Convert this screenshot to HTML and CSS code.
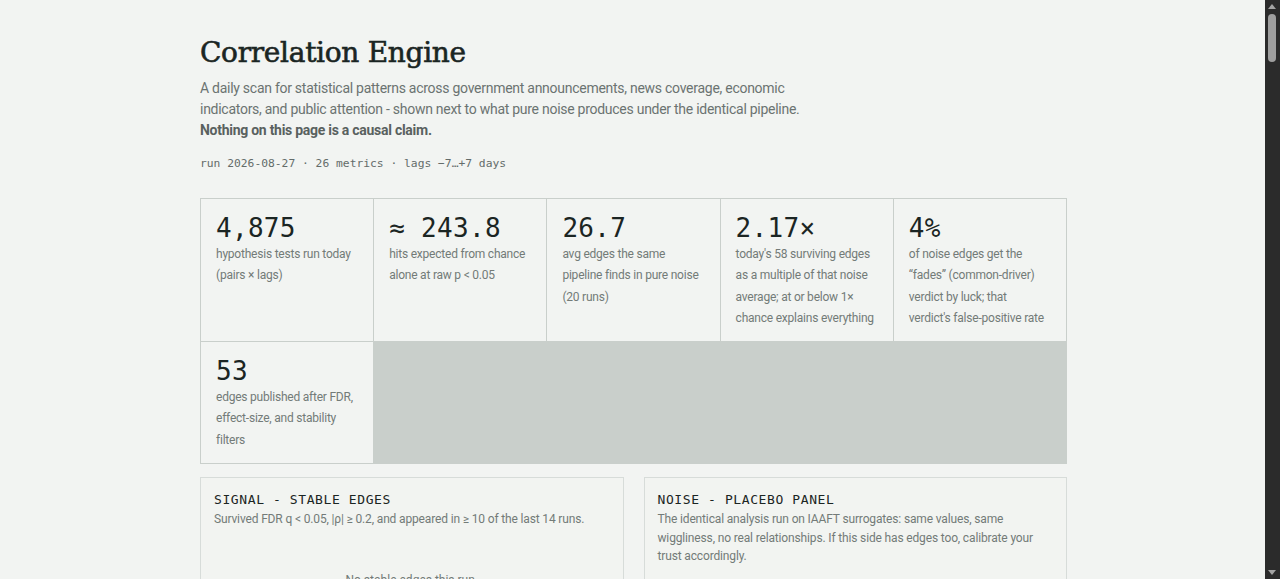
FILE: index.html
```html
<!DOCTYPE html>
<html lang="en">
<head>
<meta charset="utf-8">
<title>Correlation Engine</title>
<link rel="stylesheet" href="styles.css">
</head>
<body>
<main class="page">
  <header class="intro">
    <h1 class="title">Correlation Engine</h1>
    <p class="lede">A daily scan for statistical patterns across government announcements, news coverage, economic indicators, and public attention - shown next to what pure noise produces under the identical pipeline. <strong>Nothing on this page is a causal claim.</strong></p>
    <p class="meta">run 2026-08-27 · 26 metrics · lags −7…+7 days</p>
  </header>

  <section class="stats">
    <div class="stat">
      <div class="num">4,875</div>
      <div class="label">hypothesis tests run today (pairs × lags)</div>
    </div>
    <div class="stat">
      <div class="num">≈ 243.8</div>
      <div class="label">hits expected from chance alone at raw p &lt; 0.05</div>
    </div>
    <div class="stat">
      <div class="num">26.7</div>
      <div class="label">avg edges the same pipeline finds in pure noise (20 runs)</div>
    </div>
    <div class="stat">
      <div class="num">2.17×</div>
      <div class="label">today's 58 surviving edges as a multiple of that noise average; at or below 1× chance explains everything</div>
    </div>
    <div class="stat">
      <div class="num">4%</div>
      <div class="label">of noise edges get the “fades” (common-driver) verdict by luck; that verdict's false-positive rate</div>
    </div>
    <div class="stat">
      <div class="num">53</div>
      <div class="label">edges published after FDR, effect-size, and stability filters</div>
    </div>
  </section>

  <section class="panels">
    <article class="panel">
      <h2 class="panel-title">SIGNAL - STABLE EDGES</h2>
      <p class="panel-desc">Survived FDR q &lt; 0.05, |ρ| ≥ 0.2, and appeared in ≥ 10 of the last 14 runs.</p>
      <div class="panel-body">
        <p class="empty">No stable edges this run.</p>
      </div>
    </article>
    <article class="panel">
      <h2 class="panel-title">NOISE - PLACEBO PANEL</h2>
      <p class="panel-desc">The identical analysis run on IAAFT surrogates: same values, same wiggliness, no real relationships. If this side has edges too, calibrate your trust accordingly.</p>
      <div class="panel-body"></div>
    </article>
  </section>
</main>

<div class="scrollbar" aria-hidden="true">
  <div class="sb-arrow sb-up"></div>
  <div class="sb-thumb"></div>
  <div class="sb-arrow sb-down"></div>
</div>
</body>
</html>
```
FILE: styles.css
```css
html, body {
  margin: 0;
  padding: 0;
  background: #f2f4f2;
}
body {
  font-family: Roboto, "Noto Sans", sans-serif;
  color: #1b2523;
  padding-right: 13px;
}
.page {
  width: 867px;
  margin: 0 auto;
  padding: 33px 0 80px;
}
.title {
  font-family: "DejaVu Serif", serif;
  font-weight: 400;
  -webkit-text-stroke: 0.6px #1a2523;
  font-size: 28px;
  line-height: 40px;
  margin: 0 0 5px;
  color: #1a2523;
  letter-spacing: -0.3px;
}
.lede {
  margin: 0;
  max-width: 640px;
  font-size: 14px;
  line-height: 21px;
  letter-spacing: -0.27px;
  color: #6b7371;
}
.lede strong {
  display: block;
  color: #59615f;
  font-weight: 700;
}
.meta {
  margin: 14px 0 0;
  font-family: "DejaVu Sans Mono", monospace;
  font-size: 11.3px;
  line-height: 18px;
  color: #646c6a;
}
.stats {
  margin-top: 25px;
  display: grid;
  grid-template-columns: repeat(5, 1fr);
  gap: 1px;
  background: #c9cfcb;
  border: 1px solid #c9cfcb;
}
.stat {
  background: #f2f4f2;
  padding: 14px 15px 12px;
}
.num {
  font-family: "DejaVu Sans Mono", monospace;
  font-size: 26px;
  line-height: 31px;
  font-weight: 500;
  color: #1b2523;
  letter-spacing: 0.3px;
}
.label {
  font-size: 12px;
  line-height: 21.3px;
  letter-spacing: -0.22px;
  color: #737b78;
}
.panels {
  margin-top: 13px;
  display: grid;
  grid-template-columns: 1fr 1fr;
  gap: 20px;
}
.panel {
  border: 1px solid #d7dcd9;
  background: #f2f4f1;
  padding: 13px 13px 20px;
  min-height: 600px;
}
.panel-title {
  margin: 0;
  font-family: "DejaVu Sans Mono", monospace;
  font-weight: 500;
  font-size: 13px;
  line-height: 18px;
  letter-spacing: 0.6px;
  color: #1b2523;
}
.panel-desc {
  margin: 1px 0 0;
  font-size: 12px;
  line-height: 18.5px;
  letter-spacing: -0.15px;
  color: #737b78;
}
.panel-body {
  padding-top: 44px;
}
.empty {
  margin: 0;
  text-align: center;
  font-size: 12px;
  color: #737b78;
}
.scrollbar {
  position: fixed;
  top: 0;
  right: 0;
  width: 15px;
  height: 100%;
  background: #2b2b2b;
}
.sb-thumb {
  position: absolute;
  top: 14px;
  left: 3px;
  width: 8px;
  height: 48px;
  border-radius: 4px;
  background: #9f9f9f;
}
.sb-arrow {
  position: absolute;
  left: 3px;
  width: 0;
  height: 0;
  border-left: 4px solid transparent;
  border-right: 4px solid transparent;
}
.sb-up {
  top: 4px;
  border-bottom: 5px solid #a3a3a3;
}
.sb-down {
  bottom: 4px;
  border-top: 5px solid #a3a3a3;
}
```
